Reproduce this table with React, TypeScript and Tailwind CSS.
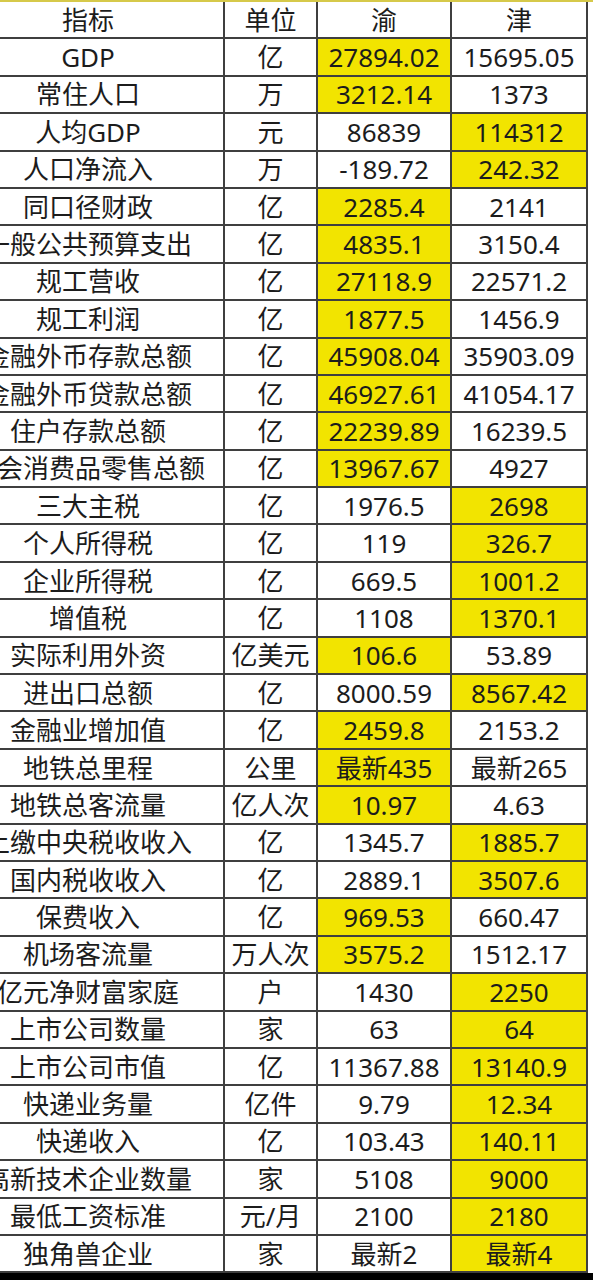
import React from 'react';

type Row = { name: string; unit: string; yu: string; jin: string; win: 'yu' | 'jin' | null };

const rows: Row[] = [
  { name: 'GDP', unit: '亿', yu: '27894.02', jin: '15695.05', win: 'yu' },
  { name: '常住人口', unit: '万', yu: '3212.14', jin: '1373', win: 'yu' },
  { name: '人均GDP', unit: '元', yu: '86839', jin: '114312', win: 'jin' },
  { name: '人口净流入', unit: '万', yu: '-189.72', jin: '242.32', win: 'jin' },
  { name: '同口径财政', unit: '亿', yu: '2285.4', jin: '2141', win: 'yu' },
  { name: '一般公共预算支出', unit: '亿', yu: '4835.1', jin: '3150.4', win: 'yu' },
  { name: '规工营收', unit: '亿', yu: '27118.9', jin: '22571.2', win: 'yu' },
  { name: '规工利润', unit: '亿', yu: '1877.5', jin: '1456.9', win: 'yu' },
  { name: '金融外币存款总额', unit: '亿', yu: '45908.04', jin: '35903.09', win: 'yu' },
  { name: '金融外币贷款总额', unit: '亿', yu: '46927.61', jin: '41054.17', win: 'yu' },
  { name: '住户存款总额', unit: '亿', yu: '22239.89', jin: '16239.5', win: 'yu' },
  { name: '社会消费品零售总额', unit: '亿', yu: '13967.67', jin: '4927', win: 'yu' },
  { name: '三大主税', unit: '亿', yu: '1976.5', jin: '2698', win: 'jin' },
  { name: '个人所得税', unit: '亿', yu: '119', jin: '326.7', win: 'jin' },
  { name: '企业所得税', unit: '亿', yu: '669.5', jin: '1001.2', win: 'jin' },
  { name: '增值税', unit: '亿', yu: '1108', jin: '1370.1', win: 'jin' },
  { name: '实际利用外资', unit: '亿美元', yu: '106.6', jin: '53.89', win: 'yu' },
  { name: '进出口总额', unit: '亿', yu: '8000.59', jin: '8567.42', win: 'jin' },
  { name: '金融业增加值', unit: '亿', yu: '2459.8', jin: '2153.2', win: 'yu' },
  { name: '地铁总里程', unit: '公里', yu: '最新435', jin: '最新265', win: 'yu' },
  { name: '地铁总客流量', unit: '亿人次', yu: '10.97', jin: '4.63', win: 'yu' },
  { name: '上缴中央税收收入', unit: '亿', yu: '1345.7', jin: '1885.7', win: 'jin' },
  { name: '国内税收收入', unit: '亿', yu: '2889.1', jin: '3507.6', win: 'jin' },
  { name: '保费收入', unit: '亿', yu: '969.53', jin: '660.47', win: 'yu' },
  { name: '机场客流量', unit: '万人次', yu: '3575.2', jin: '1512.17', win: 'yu' },
  { name: '亿元净财富家庭', unit: '户', yu: '1430', jin: '2250', win: 'jin' },
  { name: '上市公司数量', unit: '家', yu: '63', jin: '64', win: 'jin' },
  { name: '上市公司市值', unit: '亿', yu: '11367.88', jin: '13140.9', win: 'jin' },
  { name: '快递业务量', unit: '亿件', yu: '9.79', jin: '12.34', win: 'jin' },
  { name: '快递收入', unit: '亿', yu: '103.43', jin: '140.11', win: 'jin' },
  { name: '高新技术企业数量', unit: '家', yu: '5108', jin: '9000', win: 'jin' },
  { name: '最低工资标准', unit: '元/月', yu: '2100', jin: '2180', win: 'jin' },
  { name: '独角兽企业', unit: '家', yu: '最新2', jin: '最新4', win: 'jin' },
];

const cell = 'h-[37.4px] flex items-center justify-center whitespace-nowrap border-r-2 border-b-2 border-[#3f3f3f] leading-none';

const App: React.FC = () => {
  return (
    <div
      className="w-[593px] h-[1280px] overflow-hidden bg-white flex flex-col text-[#1c1c1c] text-[26px]"
      style={{ fontFamily: '"Noto Sans", "Noto Sans CJK SC", sans-serif' }}
    >
      <div className="h-[2px] bg-[#d6c94a] shrink-0" />
      <div className="ml-[-47px] grid grid-cols-[272px_93px_134px_136px] shrink-0">
        <div className={cell}>指标</div>
        <div className={cell}>单位</div>
        <div className={cell}>渝</div>
        <div className={cell}>津</div>
        {rows.map((r) => (
          <React.Fragment key={r.name}>
            <div className={`${cell} overflow-visible`}>{r.name}</div>
            <div className={cell}>{r.unit}</div>
            <div className={`${cell} ${r.win === 'yu' ? 'bg-[#f2e400]' : ''}`}>{r.yu}</div>
            <div className={`${cell} ${r.win === 'jin' ? 'bg-[#f2e400]' : ''}`}>{r.jin}</div>
          </React.Fragment>
        ))}
      </div>
      <div className="flex-1 bg-black" />
    </div>
  );
};

export default App;
